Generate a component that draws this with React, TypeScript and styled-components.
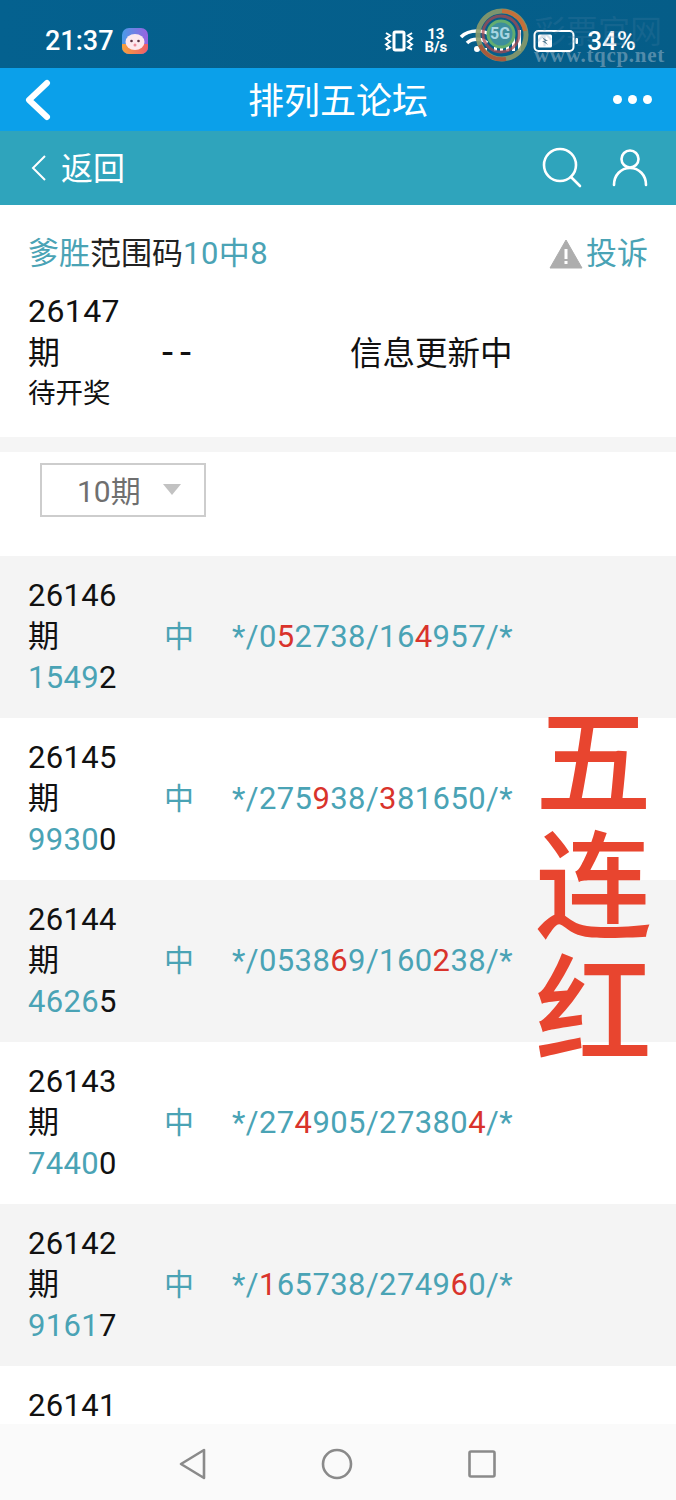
import React from "react";
import styled, { createGlobalStyle } from "styled-components";

const teal = "#4aa3b5";
const red = "#d9332b";

const rows = [
  { period: "26146", code: [["*/0"], ["5", 1], ["2738/16"], ["4", 1], ["957/*"]], draw: "1549", last: "2" },
  { period: "26145", code: [["*/275"], ["9", 1], ["38/"], ["3", 1], ["81650/*"]], draw: "9930", last: "0" },
  { period: "26144", code: [["*/0538"], ["6", 1], ["9/160"], ["2", 1], ["38/*"]], draw: "4626", last: "5" },
  { period: "26143", code: [["*/27"], ["4", 1], ["905/27380"], ["4", 1], ["/*"]], draw: "7440", last: "0" },
  { period: "26142", code: [["*/"], ["1", 1], ["65738/2749"], ["6", 1], ["0/*"]], draw: "9161", last: "7" },
];

const App = () => {
  return (
    <Page>
      <GlobalStyle />
      <StatusBar>
        <StatusLeft>
          <Clock>21:37</Clock>
          <AppBadge>
            <svg width="26" height="26" viewBox="0 0 26 26">
              <defs>
                <linearGradient id="badge" x1="0" y1="0" x2="1" y2="0">
                  <stop offset="0" stopColor="#4a9be8" />
                  <stop offset="1" stopColor="#9a62e0" />
                </linearGradient>
                <linearGradient id="badgeLow" x1="0" y1="0" x2="1" y2="0">
                  <stop offset="0" stopColor="#f6a23c" />
                  <stop offset="1" stopColor="#ee5d6c" />
                </linearGradient>
              </defs>
              <rect width="26" height="26" rx="7" fill="url(#badge)" />
              <path d="M0 16h26v3a7 7 0 0 1-7 7H7a7 7 0 0 1-7-7z" fill="url(#badgeLow)" />
              <ellipse cx="13" cy="14" rx="9.5" ry="8" fill="#fde8ee" />
              <circle cx="9.5" cy="13" r="1.3" fill="#5a3040" />
              <circle cx="16.5" cy="13" r="1.3" fill="#5a3040" />
              <circle cx="13" cy="17" r="1.5" fill="#f08a9a" />
            </svg>
          </AppBadge>
        </StatusLeft>
        <StatusRight>
          <svg width="30" height="24" viewBox="0 0 30 24" fill="none" stroke="#fff">
            <rect x="10" y="3" width="10" height="18" rx="1.5" strokeWidth="3" />
            <path d="M2 4l4 2.5-4 3 4 3-4 3 4 3-4 2M28 4l-4 2.5 4 3-4 3 4 3-4 3 4 2" strokeWidth="2" />
          </svg>
          <Speed>
            <span>13</span>
            <span>B/s</span>
          </Speed>
          <WifiSlot>
            <svg width="36" height="26" viewBox="0 0 36 26" fill="none" stroke="#fff" strokeWidth="3.6">
              <path d="M2 9c8-8 24-8 32 0M8 15c5-5 15-5 20 0" />
              <circle cx="18" cy="21" r="3" fill="#fff" stroke="none" />
              <rect x="26" y="20" width="2" height="5" fill="#fff" stroke="none" />
            </svg>
          </WifiSlot>
          <svg width="30" height="24" viewBox="0 0 30 24" fill="#fff">
            <rect x="2" y="18" width="3" height="4" />
            <rect x="8" y="15" width="3" height="7" />
            <rect x="14" y="11" width="3" height="11" />
            <rect x="20" y="6" width="3" height="16" />
            <rect x="26" y="1" width="3" height="21" />
          </svg>
          <BatterySlot>
            <svg width="46" height="24" viewBox="0 0 46 24" fill="none">
              <rect x="1.5" y="2" width="39" height="20" rx="4" stroke="#fff" strokeWidth="2" />
              <rect x="5" y="5.5" width="14" height="13" rx="1.5" fill="#fff" />
              <path d="M9 8l6 4-3 0 3 4-6-4 3 0z" fill="#5b7d8f" />
              <rect x="42.5" y="9" width="2.5" height="6" rx="1" fill="#fff" />
            </svg>
          </BatterySlot>
          <Battery>34%</Battery>
        </StatusRight>
        <Watermark aria-hidden="true">
          <svg width="56" height="56" viewBox="0 0 56 56" fill="none">
            <circle cx="28" cy="28" r="24" stroke="#8a9a6a" strokeWidth="5" opacity="0.9" />
            <path d="M28 4a24 24 0 0 1 23 20" stroke="#c4703a" strokeWidth="4" />
            <path d="M6 38a24 24 0 0 0 26 14" stroke="#a85a3c" strokeWidth="4" />
            <circle cx="27" cy="27" r="18" stroke="#a84a50" strokeWidth="3" opacity="0.75" />
            <circle cx="27" cy="27" r="13" fill="#3d8e9c" stroke="#62ad70" strokeWidth="3" />
          </svg>
          <WatermarkGlyph>5G</WatermarkGlyph>
          <WatermarkTitle>彩票官网</WatermarkTitle>
          <WatermarkUrl>www.tqcp.net</WatermarkUrl>
        </Watermark>
      </StatusBar>

      <Header>
        <HeaderSide>
          <svg width="30" height="42" viewBox="0 0 30 42" fill="none" stroke="#fff" strokeWidth="6" strokeLinecap="round" strokeLinejoin="round">
            <path d="M24 4L6 21l18 17" />
          </svg>
        </HeaderSide>
        <HeaderTitle>排列五论坛</HeaderTitle>
        <Dots>
          <Dot />
          <Dot />
          <Dot />
        </Dots>
      </Header>

      <SubBar>
        <BackLink>
          <svg width="16" height="28" viewBox="0 0 16 28" fill="none" stroke="#fff" strokeWidth="2">
            <path d="M14 2L2 14l12 12" />
          </svg>
          <span>返回</span>
        </BackLink>
        <SubIcons>
          <svg width="40" height="42" viewBox="0 0 40 42" fill="none" stroke="#fff" strokeWidth="2.6">
            <circle cx="18" cy="18" r="16" />
            <path d="M29 30l9 9" strokeLinecap="round" />
          </svg>
          <svg width="36" height="38" viewBox="0 0 36 38" fill="none" stroke="#fff" strokeWidth="2.6">
            <circle cx="18" cy="10" r="8.5" />
            <path d="M2 36c0-10 7-17 16-17s16 7 16 17" strokeLinecap="round" />
          </svg>
        </SubIcons>
      </SubBar>

      <Content>
        <Post>
          <TitleRow>
            <Title>
              <Teal>爹胜</Teal>范围码<Count>10中8</Count>
            </Title>
            <Report>
              <svg width="34" height="30" viewBox="0 0 34 30">
                <path d="M17 1L33 29H1z" fill="#adadad" stroke="#adadad" strokeLinejoin="round" />
                <rect x="15.5" y="10" width="3" height="10" fill="#fff" />
                <rect x="15.5" y="22" width="3" height="3" fill="#fff" />
              </svg>
              <Teal>投诉</Teal>
            </Report>
          </TitleRow>
          <Pending>
            <PendingPeriod>
              <LargeLine>26147</LargeLine>
              <LargeLine>期</LargeLine>
              <SmallLine>待开奖</SmallLine>
            </PendingPeriod>
            <PendingDash>--</PendingDash>
            <PendingInfo>信息更新中</PendingInfo>
          </Pending>
        </Post>
        <Strip />
        <FilterBar>
          <Select>
            <span>10期</span>
            <Caret />
          </Select>
        </FilterBar>
        {rows.map((row, i) => (
          <Row key={row.period} $shaded={i % 2 === 0}>
            <PeriodCell>
              <Line>{row.period}</Line>
              <Line>期</Line>
              <Line>
                <Teal>{row.draw}</Teal>
                {row.last}
              </Line>
            </PeriodCell>
            <HitMark>中</HitMark>
            <Code>
              {row.code.map((part, j) =>
                part[1] ? <Hit key={j}>{part[0]}</Hit> : <span key={j}>{part[0]}</span>
              )}
            </Code>
          </Row>
        ))}
        <Row $shaded={false}>
          <PeriodCell>
            <Line>26141</Line>
          </PeriodCell>
        </Row>
        <Stamp aria-label="五连红">
          <span>五</span>
          <span>连</span>
          <span>红</span>
        </Stamp>
      </Content>

      <NavBar>
        <svg width="28" height="32" viewBox="0 0 28 32" fill="none" stroke="#8a8a8a" strokeWidth="2.6" strokeLinejoin="round">
          <path d="M25 2v28L2 16z" />
        </svg>
        <svg width="32" height="32" viewBox="0 0 32 32" fill="none" stroke="#8a8a8a" strokeWidth="2.6">
          <circle cx="16" cy="16" r="14" />
        </svg>
        <svg width="30" height="30" viewBox="0 0 30 30" fill="none" stroke="#8a8a8a" strokeWidth="2.6" strokeLinejoin="round">
          <rect x="2.5" y="2.5" width="25" height="25" rx="1.5" />
        </svg>
      </NavBar>
    </Page>
  );
};

const GlobalStyle = createGlobalStyle`
  html, body {
    margin: 0;
    padding: 0;
    background: #fff;
  }
  body {
    font-family: "Roboto", "Noto Sans CJK SC", sans-serif;
  }
`;

const Page = styled.div`
  width: 676px;
  height: 1500px;
  display: flex;
  flex-direction: column;
  overflow: hidden;
  color: #111;
`;

const StatusBar = styled.div`
  position: relative;
  height: 68px;
  flex: none;
  display: flex;
  align-items: center;
  justify-content: space-between;
  padding: 14px 40px 0 45px;
  box-sizing: border-box;
  background: linear-gradient(90deg, #04618f, #055d88);
  color: #fff;
`;

const StatusLeft = styled.div`
  display: flex;
  align-items: center;
  gap: 8px;
`;

const Clock = styled.span`
  font-size: 27px;
  font-weight: 500;
`;

const AppBadge = styled.span`
  display: flex;
`;

const StatusRight = styled.div`
  display: flex;
  align-items: center;
  gap: 9px;
`;

const Speed = styled.span`
  display: flex;
  flex-direction: column;
  align-items: center;
  font-size: 15px;
  line-height: 13px;
  font-weight: 700;
  margin: 0 3px 0 1px;
`;

const WifiSlot = styled.span`
  display: flex;
  margin-right: -12px;
`;

const BatterySlot = styled.span`
  display: flex;
  margin-left: 2px;
`;

const Battery = styled.span`
  font-size: 26px;
  font-weight: 500;
  margin-left: -1px;
`;

const Watermark = styled.div`
  position: absolute;
  left: 474px;
  top: 7px;
  width: 202px;
  height: 56px;
  & > svg {
    position: absolute;
    left: 0;
    top: 0;
  }
`;

const WatermarkGlyph = styled.span`
  position: absolute;
  left: 16px;
  top: 17px;
  font-size: 16px;
  font-weight: 700;
  color: #a8d6e2;
`;

const WatermarkTitle = styled.span`
  position: absolute;
  left: 60px;
  top: 9px;
  font-size: 32px;
  line-height: 32px;
  color: rgba(80, 130, 165, 0.22);
  white-space: nowrap;
`;

const WatermarkUrl = styled.span`
  position: absolute;
  left: 60px;
  top: 38px;
  font-family: "Liberation Serif", serif;
  font-size: 21px;
  line-height: 20px;
  font-weight: 700;
  letter-spacing: 0.7px;
  color: rgba(150, 180, 200, 0.55);
  white-space: nowrap;
`;

const Header = styled.div`
  height: 63px;
  flex: none;
  display: grid;
  grid-template-columns: 100px 1fr 100px;
  align-items: center;
  background: #0ba0ea;
  color: #fff;
`;

const HeaderSide = styled.div`
  display: flex;
  padding-left: 23px;
`;

const HeaderTitle = styled.div`
  text-align: center;
  font-size: 36px;
  line-height: 63px;
  padding-top: 3px;
  height: 63px;
  box-sizing: border-box;
`;

const Dots = styled.div`
  display: flex;
  justify-content: flex-end;
  gap: 6px;
  padding-right: 24px;
`;

const Dot = styled.i`
  width: 9px;
  height: 9px;
  border-radius: 50%;
  background: #fff;
`;

const SubBar = styled.div`
  height: 74px;
  flex: none;
  display: flex;
  align-items: center;
  justify-content: space-between;
  padding: 0 28px 0 31px;
  box-sizing: border-box;
  background: #2fa4bc;
  color: #fff;
`;

const BackLink = styled.div`
  display: flex;
  align-items: center;
  gap: 14px;
  font-size: 32px;
  line-height: 40px;

  & > span {
    margin-top: 2px;
  }
`;

const SubIcons = styled.div`
  display: flex;
  align-items: center;
  gap: 30px;
`;

const Content = styled.div`
  position: relative;
  flex: 1;
  min-height: 0;
  overflow: hidden;
  background: #fff;
`;

const Post = styled.div`
  height: 232px;
  box-sizing: border-box;
  padding: 26px 28px 0 28px;
`;

const TitleRow = styled.div`
  display: flex;
  align-items: center;
  justify-content: space-between;
  height: 46px;
`;

const Title = styled.div`
  font-size: 31px;
  line-height: 46px;
  color: #222;
`;

const Teal = styled.span`
  color: ${teal};
`;

const Count = styled(Teal)`
  letter-spacing: 0.5px;
`;

const Report = styled.div`
  display: flex;
  align-items: center;
  gap: 3px;
  font-size: 31px;
  line-height: 42px;
  margin-top: -1px;
`;

const Pending = styled.div`
  display: grid;
  grid-template-columns: 134px 188px 1fr;
  align-items: center;
  margin-top: 13px;
`;

const PendingPeriod = styled.div`
  display: flex;
  flex-direction: column;
`;

const LargeLine = styled.span`
  font-size: 32px;
  line-height: 42px;
  letter-spacing: 0.4px;
  color: #111;
`;

const SmallLine = styled.span`
  font-size: 27.5px;
  line-height: 38px;
  letter-spacing: 0;
  margin-top: 1px;
  color: #111;
`;

const PendingDash = styled.span`
  font-size: 40px;
  line-height: 42px;
  letter-spacing: 7px;
  margin-top: 3px;
`;

const PendingInfo = styled.span`
  font-size: 32.5px;
  line-height: 42px;
  margin-top: 4px;
`;

const Strip = styled.div`
  height: 15px;
  background: #f5f5f5;
`;

const FilterBar = styled.div`
  height: 104px;
  box-sizing: border-box;
  padding: 11px 0 0 40px;
`;

const Select = styled.div`
  width: 166px;
  height: 54px;
  box-sizing: border-box;
  border: 2px solid #cdcdcd;
  display: flex;
  align-items: center;
  padding: 0 0 2px 35px;
  gap: 22px;
  font-size: 30px;
  color: #6f6f6f;
`;

const Caret = styled.i`
  width: 0;
  height: 0;
  border-left: 9px solid transparent;
  border-right: 9px solid transparent;
  border-top: 11px solid #c2c2c2;
`;

const Row = styled.div<{ $shaded: boolean }>`
  height: 162px;
  box-sizing: border-box;
  padding: 19px 0 0 28px;
  display: grid;
  grid-template-columns: 136px 68px 1fr;
  align-items: start;
  background: ${(props) => (props.$shaded ? "#f4f4f4" : "#fff")};
`;

const PeriodCell = styled.div`
  display: flex;
  flex-direction: column;
`;

const Line = styled.span`
  font-size: 31px;
  line-height: 41px;
  letter-spacing: 0.3px;
  color: #111;
`;

const HitMark = styled.span`
  font-size: 30px;
  line-height: 41px;
  margin-top: 41px;
  color: ${teal};
`;

const Code = styled.span`
  font-size: 31px;
  line-height: 41px;
  margin-top: 41px;
  letter-spacing: 0.4px;
  white-space: nowrap;
  color: ${teal};
`;

const Hit = styled.span`
  color: ${red};
`;

const Stamp = styled.div`
  position: absolute;
  left: 535px;
  top: 487px;
  display: flex;
  flex-direction: column;
  font-size: 117px;
  line-height: 124px;
  font-weight: 500;
  font-family: "Noto Sans CJK SC", sans-serif;
  color: #e8452f;
`;

const NavBar = styled.div`
  height: 76px;
  flex: none;
  display: flex;
  align-items: center;
  justify-content: center;
  gap: 114px;
  padding-top: 3px;
  box-sizing: border-box;
  background: #fafafa;
`;

export default App;
